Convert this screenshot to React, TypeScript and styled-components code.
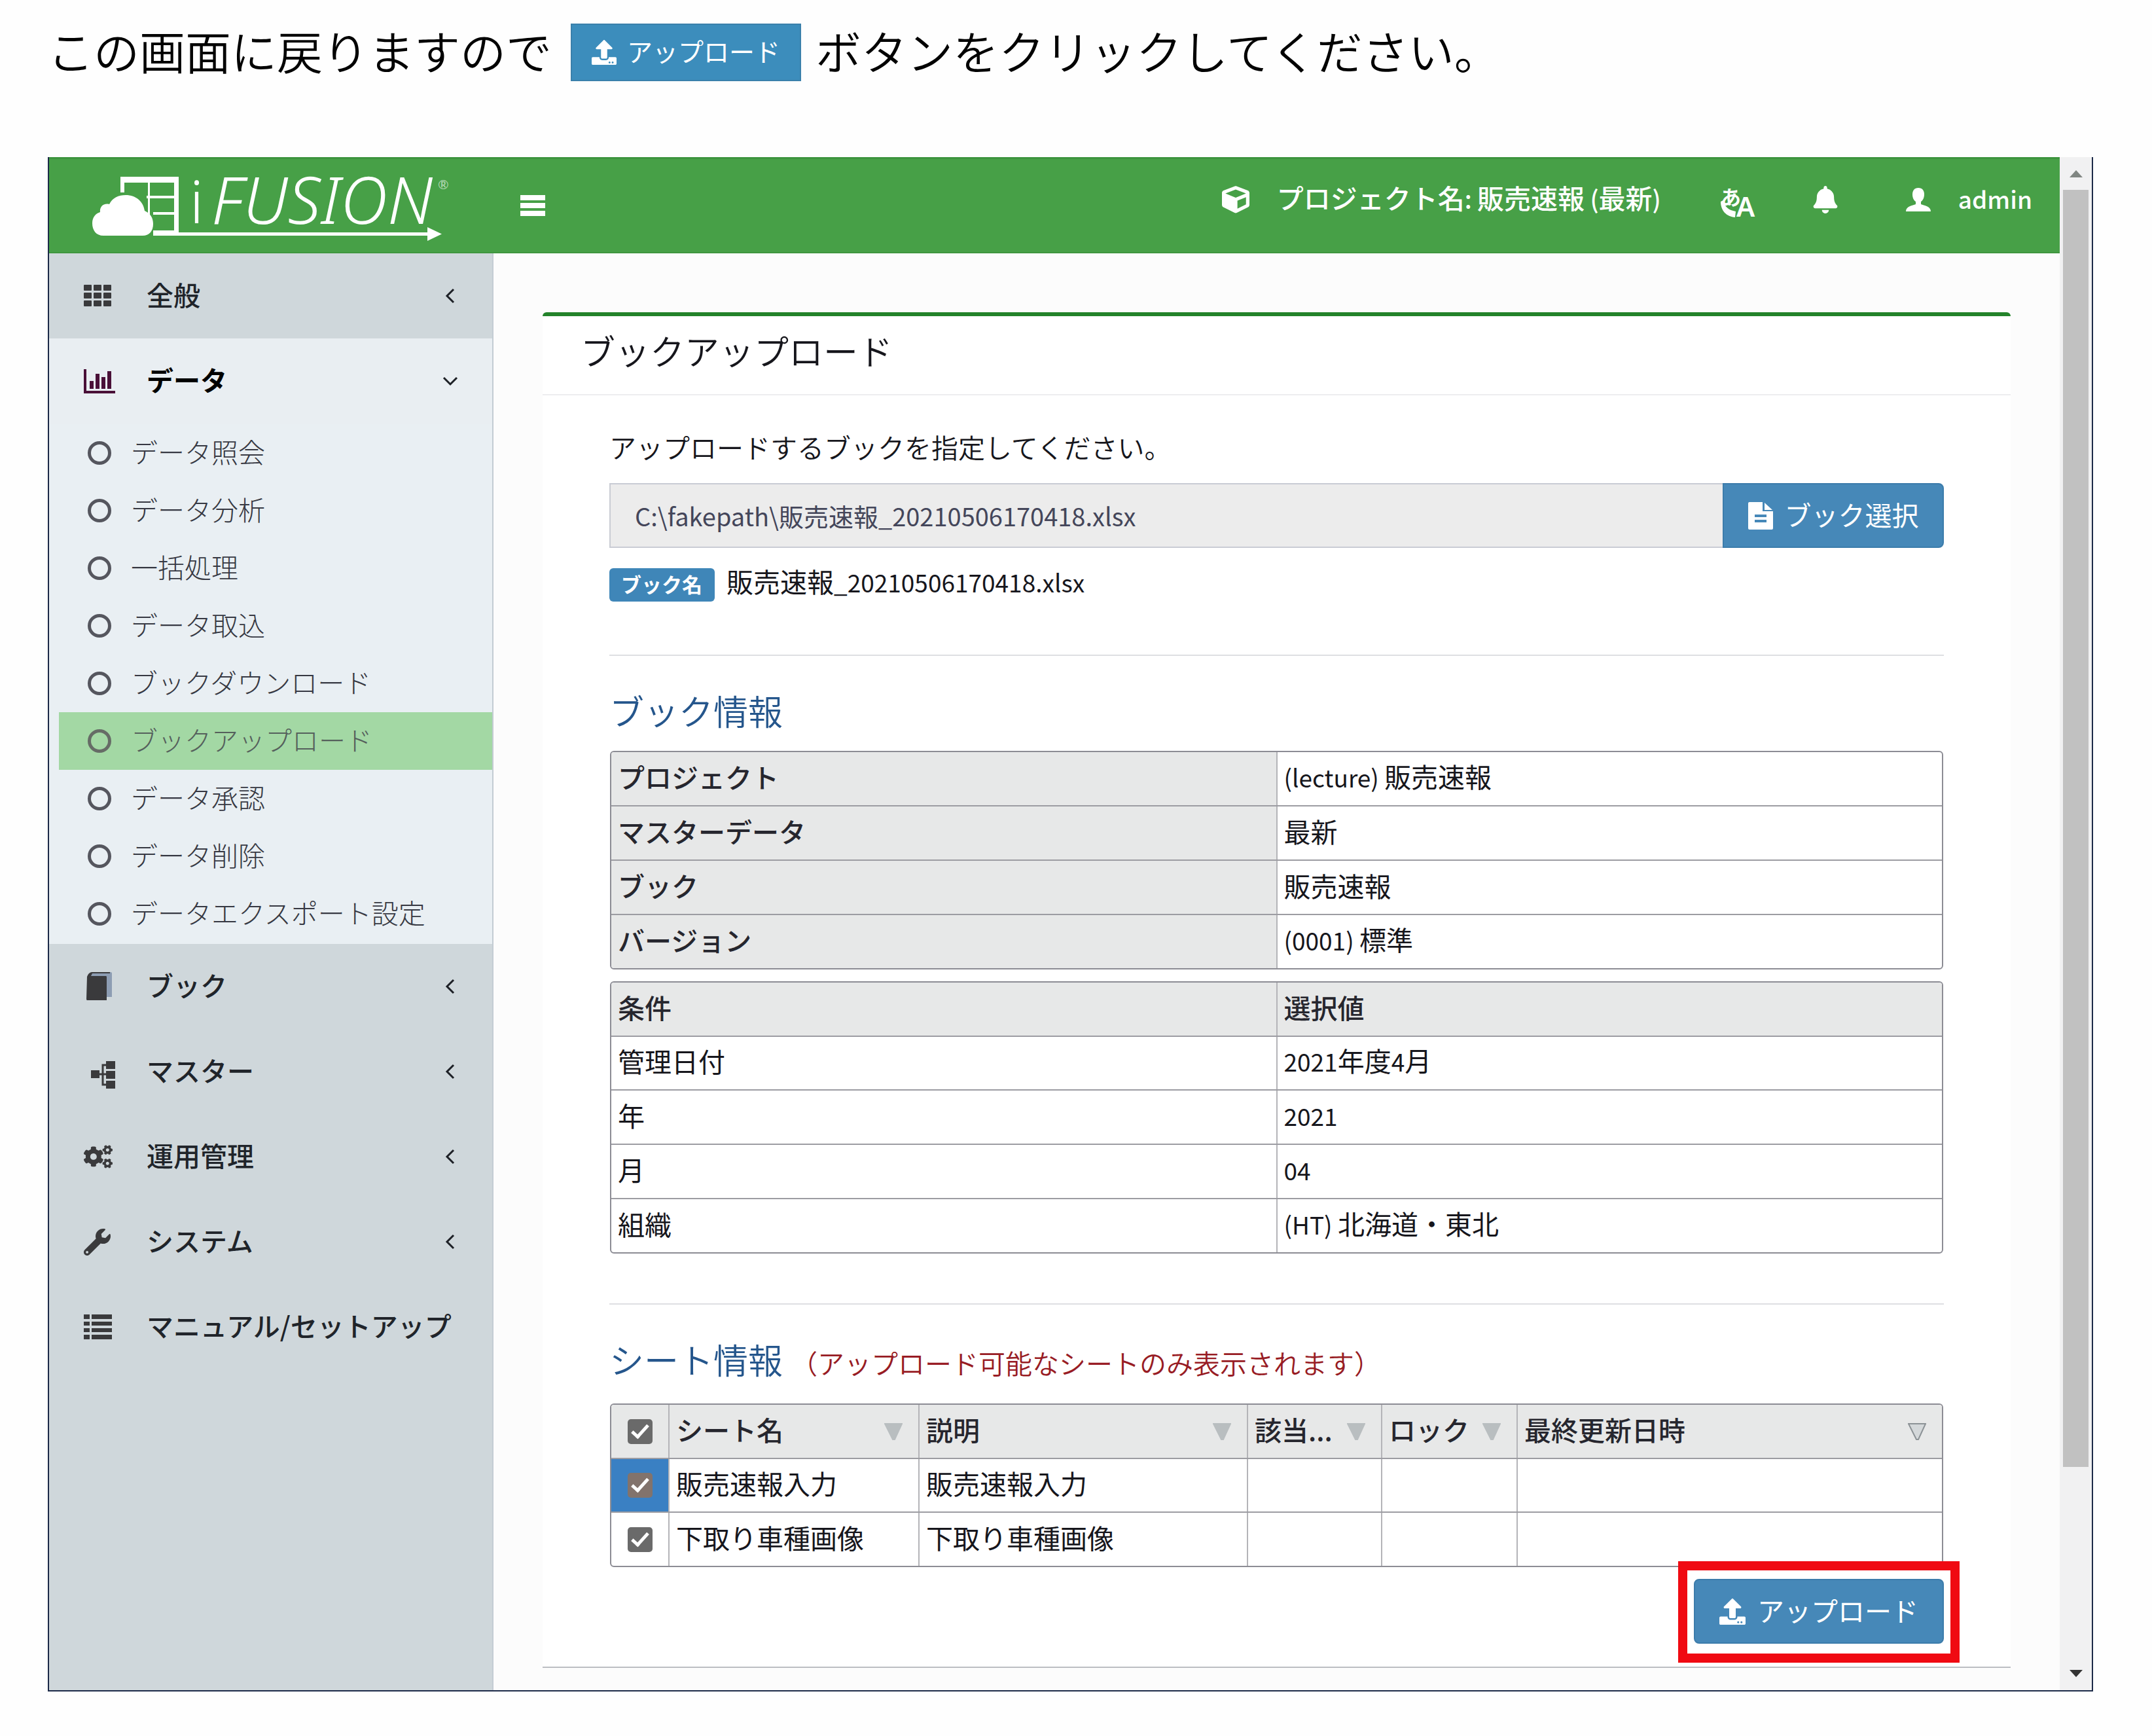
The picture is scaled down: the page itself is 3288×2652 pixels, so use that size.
import React from "react";
import styled, { createGlobalStyle } from "styled-components";
import { FaUpload, FaBell, FaCogs, FaWrench, FaCube } from "react-icons/fa";

const font = `"Noto Sans CJK JP", "Noto Sans", sans-serif`;

const GlobalStyle = createGlobalStyle`
  *, *::before, *::after { box-sizing: border-box; }
  body { margin: 0; background: #fefefe; color: #16161c; font: 400 41px/60px ${font}; }
  button, input { font-family: inherit; }
  svg { display: block; flex: none; }
`;

const Latin = styled.span`
  font-size: 37px;
`;

/* Latin runs are set a little smaller than the kana and kanji around them. */
const Mixed = ({ text }: { text: string }) => (
  <>
    {text.split(/([\x20-\x7e]+)/).map((part, i) => (i % 2 ? <Latin key={i}>{part}</Latin> : part))}
  </>
);

/* Text beside an icon, raised so that its ink is centred on the icon. */
const Label = styled.span`
  padding-bottom: 6px;
`;

const Page = styled.div`
  padding: 36px 90px 68px 73px;
`;

const Instruction = styled.p`
  display: flex;
  align-items: center;
  margin: 0 0 116px;
  font-size: 70px;
  line-height: 82px;
  font-weight: 350;
  color: #000;
`;

const Button = styled.button<{ $kind?: "inline" | "addon" }>`
  position: relative;
  display: inline-flex;
  align-items: center;
  justify-content: center;
  flex: none;
  gap: ${(p) => (p.$kind === "inline" ? 16 : 18)}px;
  height: ${(p) => (p.$kind === "inline" ? 88 : 99)}px;
  width: ${(p) => (p.$kind === "inline" ? 352 : p.$kind === "addon" ? 338 : 382)}px;
  margin: ${(p) => (p.$kind === "inline" ? "0 22px 0 29px" : "0")};
  padding: 0;
  border: 2px solid ${(p) => (p.$kind === "inline" ? "#3a80ab" : "#3c7cab")};
  border-radius: ${(p) => (p.$kind === "inline" ? "0" : p.$kind === "addon" ? "0 8px 8px 0" : "8px")};
  background: ${(p) => (p.$kind === "inline" ? "#3c8dbc" : "#4688b8")};
  color: #fff;
  font-size: ${(p) => (p.$kind === "inline" ? 39 : 41)}px;
  line-height: 60px;
`;

const Frame = styled.div`
  display: flex;
  border: solid #1c2a48;
  border-width: 0 2px 2px;
`;

const Window = styled.div`
  flex: 1;
  min-width: 0;
  display: flex;
  flex-direction: column;
`;

const Header = styled.header`
  display: flex;
  align-items: flex-start;
  height: 147px;
  background: #47a047;
  border-top: 3px solid #3d943e;
  border-bottom: 2px solid #3f963f;
  color: #fff;
`;

const MenuToggle = styled.button`
  margin: 47px auto 0 160px;
  padding: 8px 0;
  border: 0;
  background: none;
  color: #fff;
`;

const NavItem = styled.a<{ $gap: number }>`
  display: flex;
  align-items: center;
  gap: 42px;
  height: 60px;
  margin: 32px ${(p) => p.$gap}px 0 0;
  color: #fff;
  font-weight: 500;
  text-decoration: none;
`;

const Body = styled.div`
  display: flex;
  flex: 1;
`;

const Sidebar = styled.nav`
  width: 679px;
  flex: none;
  background: #cfd7db;
  border-right: 2px solid #c3ccd3;
`;

const MenuLink = styled.a<{ $open?: boolean }>`
  display: flex;
  align-items: center;
  height: 130px;
  padding: 0 52px 0 53px;
  background: ${(p) => (p.$open ? "#e9eef2" : "transparent")};
  color: ${(p) => (p.$open ? "#000" : "#20242a")};
  font-weight: ${(p) => (p.$open ? 700 : 500)};
  text-decoration: none;
  white-space: nowrap;
`;

const MenuIcon = styled.span<{ $color?: string }>`
  display: flex;
  width: 96px;
  color: ${(p) => p.$color ?? "#3a3a3c"};
`;

const MenuText = styled(Label)`
  flex: 1;
`;

const SubMenu = styled.ul`
  margin: 0;
  padding: 1px 0 2px 15px;
  list-style: none;
  background: #e9eff3;
`;

const SubLink = styled.a<{ $active?: boolean }>`
  display: flex;
  align-items: center;
  gap: 30px;
  height: 88px;
  padding-left: 44px;
  background: ${(p) => (p.$active ? "#a3d8a4" : "transparent")};
  color: ${(p) => (p.$active ? "#55605c" : "#363842")};
  font-weight: 300;
  text-decoration: none;
`;

const Circle = styled.span<{ $active?: boolean }>`
  width: 36px;
  height: 36px;
  border: 5px solid ${(p) => (p.$active ? "#666c66" : "#55565e")};
  border-radius: 50%;
`;

const Main = styled.main`
  flex: 1;
  min-width: 0;
  padding: 90px 75px 34px;
  background: #fcfcfc;
`;

const Panel = styled.section`
  border-top: 6px solid #23832a;
  border-bottom: 2px solid #bcbec2;
  border-radius: 6px 6px 0 0;
  background: #fff;
`;

const PanelTitle = styled.h1`
  margin: 0;
  padding: 17px 58px 32px;
  border-bottom: 2px solid #ededef;
  font-size: 53px;
  line-height: 70px;
  font-weight: 350;
`;

const PanelBody = styled.div`
  padding: 48px 102px 35px;
`;

const FieldLabel = styled.label`
  display: block;
  margin-bottom: 26px;
  font-weight: 350;
`;

const InputGroup = styled.div`
  display: flex;
`;

const PathInput = styled.input`
  flex: 1;
  min-width: 0;
  height: 99px;
  padding: 0 37px;
  border: 2px solid #c9ccd4;
  border-right: 0;
  border-radius: 0;
  background: #ececec;
  color: #44465a;
  font-size: 38px;
  font-weight: 400;
`;

const FileRow = styled.div`
  display: flex;
  align-items: baseline;
  gap: 18px;
  margin-top: 20px;
  padding-bottom: 5px;
  font-weight: 400;
`;

const Badge = styled.span`
  padding: 0 19px 4px 18px;
  border-radius: 6px;
  background: #3f86b8;
  color: #fff;
  font-size: 31px;
  line-height: 47px;
  font-weight: 700;
`;

const Rule = styled.hr`
  height: 2px;
  margin: 76px 0 48px;
  border: 0;
  background: #dedfe2;
`;

const SectionTitle = styled.h2`
  display: flex;
  align-items: baseline;
  gap: 12px;
  margin: 0 0 27px;
  color: #25568c;
  font-size: 53px;
  line-height: 70px;
  font-weight: 350;
`;

const Note = styled.small`
  color: #981c24;
  font-size: 41px;
  line-height: 72px;
`;

const TableBox = styled.div`
  margin: 0 1px 18px;
  border: 2px solid #8c8c94;
  border-radius: 6px;
  overflow: hidden;
`;

const Table = styled.table`
  width: 100%;
  border-collapse: collapse;
  table-layout: fixed;
  font-weight: 400;

  th, td {
    height: 83px;
    padding: 0 10px 8px;
    border: 2px solid #9c9ca2;
    border-left-color: #b4b4b8;
    border-right-color: #b4b4b8;
    text-align: left;
    white-space: nowrap;
  }
  th {
    background: #e7e8e8;
    color: #26262e;
    font-weight: 500;
  }
  tr:first-child > * { border-top: 0; height: 82px; }
  thead + tbody tr:first-child > * { border-top: 2px solid #9c9ca2; }
  tr > :first-child { border-left: 0; }
  tr > :last-child { border-right: 0; }
  tbody tr:last-child > * { border-bottom: 0; height: 82px; }
`;

const CheckCell = styled.td<{ $selected?: boolean }>`
  background: ${(p) => (p.$selected ? "#3a80c3" : "transparent")};
`;

const Check = styled.input.attrs({ type: "checkbox" })<{ $warm?: boolean }>`
  appearance: none;
  display: block;
  width: 38px;
  height: 38px;
  margin: 8px auto 0;
  border-radius: 5px;
  background: ${(p) => (p.$warm ? "#82736c" : "#6a6a6a")};

  &:checked::before {
    content: "";
    display: block;
    width: 14px;
    height: 26px;
    margin: 3px auto 0;
    border: solid #fff;
    border-width: 0 5px 5px 0;
    transform: rotate(42deg);
  }
`;

const HeadCell = styled.div`
  display: flex;
  align-items: center;
  justify-content: space-between;
`;

const FilterButton = styled.button`
  padding: 10px 14px 0 0;
  border: 0;
  background: none;
`;

const Actions = styled.div`
  display: flex;
  justify-content: flex-end;
`;

const Highlight = styled.div`
  position: relative;
  display: flex;

  &::before {
    content: "";
    position: absolute;
    inset: -27px -24px -29px;
    border: 14px solid #f00a12;
    background: #fff;
  }
`;

const Scrollbar = styled.div`
  display: flex;
  flex-direction: column;
  align-items: center;
  width: 49px;
  flex: none;
  background: #f1f1f2;
`;

const ScrollArrow = styled.span`
  display: flex;
  align-items: center;
  height: 50px;
`;

const Track = styled.div`
  flex: 1;
  width: 39px;
`;

const Thumb = styled.div`
  height: 87%;
  background: #c1c1c1;
`;

const Logo = () => (
  <svg width="560" height="144" viewBox="75 243 560 144" overflow="visible" fill="#fff" role="img" aria-label="iFUSION">
    <path d="M184 270H273V355H653V347L675 357.500L653 368V360H234V352H266V328H234V324H266V303H224V299H266V279H190V294H184Z" />
    <path d="M226 279H229V330H226Z" />
    <path d="M158 360C147 360 141 352 141 341C141 331 147 326 153 324C152 316 158 310 167 312C172 302 181 298 192 298C208 298 219 308 221 322C230 326 234 333 234 342C234 353 228 360 218 360Z" />
    <text x="290" y="341" fontFamily="Noto Sans" fontWeight="300" fontSize="90">i</text>
    <text x="323" y="342" fontFamily="Noto Sans" fontWeight="300" fontStyle="italic" fontSize="100">FUSION</text>
    <text x="669" y="289" fontFamily="Lato" fontSize="20" opacity="0.6">®</text>
  </svg>
);

const MenuBars = () => (
  <svg width="38" height="32" viewBox="0 0 38 32" fill="#fff">
    <path d="M0 0H38V8H0ZM0 12H38V20H0ZM0 24H38V32H0Z" />
  </svg>
);

const LanguageIcon = () => (
  <svg width="56" height="90" viewBox="0 -20 56 90" fill="#fff">
    <text x="1" y="33" fontSize="31" fontWeight="700">あ</text>
    <text x="25" y="51" fontFamily="Noto Sans" fontSize="42" fontWeight="600">A</text>
    <path d="M5 26C7 36 13 41 24 43L23 52C10 51 1 42 1 28Z" />
  </svg>
);

const UserIcon = () => (
  <svg width="38" height="36" viewBox="0 0 38 36" fill="currentColor">
    <path d="M19 0C25 0 28 4 28 10C28 15 26 19 23 21V25C28 27 38 28 38 36H0C0 28 10 27 15 25V21C12 19 10 15 10 10C10 4 13 0 19 0Z" />
  </svg>
);

const FileIcon = () => (
  <svg width="38" height="42" viewBox="0 0 38 42">
    <path fill="#fff" d="M2 0H22V14H38V40Q38 42 36 42H2Q0 42 0 40V2Q0 0 2 0ZM25 1L37 12H25Z" />
    <path fill="#4688b8" d="M10 19H28V23H10ZM10 27H28V31H10Z" />
  </svg>
);

const GridIcon = () => (
  <svg width="42" height="34" viewBox="0 0 42 34" fill="currentColor">
    {[0, 15, 30].map((x) => [0, 12, 24].map((y) => <rect key={`${x}-${y}`} x={x} y={y} width="12" height="9" rx="1" />))}
  </svg>
);

const ChartIcon = () => (
  <svg width="48" height="37" viewBox="0 0 48 37" fill="currentColor">
    <path d="M0 0H4V33H48V37H0ZM9 18H15V30H9ZM18 7H24V30H18ZM27 12H33V30H27ZM36 3H42V30H36Z" />
  </svg>
);

const BookIcon = () => (
  <svg width="44" height="44" viewBox="0 0 44 44">
    <path fill="#8d9db3" d="M12 0H41Q43 0 43 2V38H34V8H8Z" />
    <path fill="currentColor" d="M5 7Q7 1 12 0H40V2H13L11 6H34Q35 6 35 8V43H5Q4 43 4 41Z" />
  </svg>
);

const TreeIcon = () => (
  <svg width="48" height="52" viewBox="0 0 48 52" fill="currentColor">
    <path d="M11 24H24V36H11ZM34 10H48V22H34ZM34 25H48V37H34ZM34 40H48V52H34Z" />
    <path fill="none" stroke="currentColor" strokeWidth="3" d="M24 30H34M34 16H29V46H34" />
  </svg>
);

const ListIcon = () => (
  <svg width="43" height="38" viewBox="0 0 43 38" fill="currentColor">
    <path d="M0 0H9V7H0ZM12 0H43V7H12ZM0 11H9V17H0ZM12 11H43V17H12ZM0 21H9V27H0ZM12 21H43V27H12ZM0 31H9V38H0ZM12 31H43V38H12Z" />
  </svg>
);

const Chevron = ({ down }: { down?: boolean }) => (
  <svg width="24" height="24" viewBox="0 0 24 24" fill="none" stroke="#1d2026" strokeWidth="3">
    <path d={down ? "M2 7L12 17L22 7" : "M17 2L7 12L17 22"} />
  </svg>
);

const FilterIcon = ({ last }: { last?: boolean }) => (
  <svg width="28" height="27" viewBox="0 0 28 27">
    <path
      d="M1 1H27L16 25H13Z"
      fill={last ? "#d4d8da" : "#b9bec0"}
      stroke={last ? "#8c9296" : "#b9bec0"}
      strokeWidth="2"
    />
  </svg>
);

const Arrow = ({ down }: { down?: boolean }) => (
  <svg width="20" height="12" viewBox="0 0 20 12" fill={down ? "#333" : "#808682"}>
    <path d={down ? "M0 0H20L10 11Z" : "M0 12H20L10 1Z"} />
  </svg>
);

const subItems = [
  "データ照会",
  "データ分析",
  "一括処理",
  "データ取込",
  "ブックダウンロード",
  "ブックアップロード",
  "データ承認",
  "データ削除",
  "データエクスポート設定",
];

const lowerMenu = [
  { label: "ブック", icon: <BookIcon />, arrow: true },
  { label: "マスター", icon: <TreeIcon />, arrow: true },
  { label: "運用管理", icon: <FaCogs size={44} />, arrow: true },
  { label: "システム", icon: <FaWrench size={41} />, arrow: true },
  { label: "マニュアル/セットアップ", icon: <ListIcon />, arrow: false },
];

const bookInfo = [
  ["プロジェクト", "(lecture) 販売速報"],
  ["マスターデータ", "最新"],
  ["ブック", "販売速報"],
  ["バージョン", "(0001) 標準"],
];

const conditions = [
  ["管理日付", "2021年度4月"],
  ["年", "2021"],
  ["月", "04"],
  ["組織", "(HT) 北海道・東北"],
];

const sheetColumns = ["シート名", "説明", "該当...", "ロック", "最終更新日時"];
const sheets = ["販売速報入力", "下取り車種画像"];

export default function App() {
  return (
    <Page>
      <GlobalStyle />
      <Instruction>
        <Label>この画面に戻りますので</Label>
        <Button type="button" $kind="inline">
          <FaUpload size={38} />
          <Label>アップロード</Label>
        </Button>
        <Label>ボタンをクリックしてください。</Label>
      </Instruction>

      <Frame>
        <Window>
          <Header>
            <Logo />
            <MenuToggle type="button" aria-label="メニュー">
              <MenuBars />
            </MenuToggle>
            <NavItem href="#project" $gap={90}>
              <FaCube size={42} />
              <Label>
                <Mixed text="プロジェクト名: 販売速報 (最新)" />
              </Label>
            </NavItem>
            <NavItem href="#language" $gap={84} aria-label="言語">
              <LanguageIcon />
            </NavItem>
            <NavItem href="#notices" $gap={102} aria-label="通知">
              <FaBell size={42} />
            </NavItem>
            <NavItem href="#user" $gap={42}>
              <UserIcon />
              <Label>
                <Latin>admin</Latin>
              </Label>
            </NavItem>
          </Header>

          <Body>
            <Sidebar>
              <MenuLink href="#general">
                <MenuIcon>
                  <GridIcon />
                </MenuIcon>
                <MenuText>全般</MenuText>
                <Chevron />
              </MenuLink>
              <MenuLink href="#data" $open>
                <MenuIcon $color="#4a1038">
                  <ChartIcon />
                </MenuIcon>
                <MenuText>データ</MenuText>
                <Chevron down />
              </MenuLink>
              <SubMenu>
                {subItems.map((label) => {
                  const active = label === "ブックアップロード";
                  return (
                    <li key={label}>
                      <SubLink href="#item" $active={active}>
                        <Circle $active={active} />
                        <Label>{label}</Label>
                      </SubLink>
                    </li>
                  );
                })}
              </SubMenu>
              {lowerMenu.map((item) => (
                <MenuLink href="#menu" key={item.label}>
                  <MenuIcon>{item.icon}</MenuIcon>
                  <MenuText>{item.label}</MenuText>
                  {item.arrow && <Chevron />}
                </MenuLink>
              ))}
            </Sidebar>

            <Main>
              <Panel>
                <PanelTitle>ブックアップロード</PanelTitle>
                <PanelBody>
                  <FieldLabel htmlFor="book-path">アップロードするブックを指定してください。</FieldLabel>
                  <InputGroup>
                    <PathInput id="book-path" readOnly value={"C:\\fakepath\\販売速報_20210506170418.xlsx"} />
                    <Button type="button" $kind="addon">
                      <FileIcon />
                      <Label>ブック選択</Label>
                    </Button>
                  </InputGroup>
                  <FileRow>
                    <Badge>ブック名</Badge>
                    <span>
                      <Mixed text="販売速報_20210506170418.xlsx" />
                    </span>
                  </FileRow>

                  <Rule />
                  <SectionTitle>ブック情報</SectionTitle>
                  <TableBox>
                    <Table>
                      <tbody>
                        {bookInfo.map(([name, value]) => (
                          <tr key={name}>
                            <th scope="row">{name}</th>
                            <td>
                              <Mixed text={value} />
                            </td>
                          </tr>
                        ))}
                      </tbody>
                    </Table>
                  </TableBox>
                  <TableBox>
                    <Table>
                      <thead>
                        <tr>
                          <th scope="col">条件</th>
                          <th scope="col">選択値</th>
                        </tr>
                      </thead>
                      <tbody>
                        {conditions.map(([name, value]) => (
                          <tr key={name}>
                            <td>{name}</td>
                            <td>
                              <Mixed text={value} />
                            </td>
                          </tr>
                        ))}
                      </tbody>
                    </Table>
                  </TableBox>

                  <Rule />
                  <SectionTitle>
                    シート情報
                    <Note>（アップロード可能なシートのみ表示されます）</Note>
                  </SectionTitle>
                  <TableBox>
                    <Table>
                      <colgroup>
                        <col width="88" />
                        <col width="382" />
                        <col width="502" />
                        <col width="205" />
                        <col width="207" />
                        <col />
                      </colgroup>
                      <thead>
                        <tr>
                          <th scope="col">
                            <Check defaultChecked aria-label="すべて選択" />
                          </th>
                          {sheetColumns.map((name, i) => (
                            <th scope="col" key={name}>
                              <HeadCell>
                                {name}
                                <FilterButton type="button" aria-label={`${name} フィルター`}>
                                  <FilterIcon last={i === sheetColumns.length - 1} />
                                </FilterButton>
                              </HeadCell>
                            </th>
                          ))}
                        </tr>
                      </thead>
                      <tbody>
                        {sheets.map((name, i) => (
                          <tr key={name}>
                            <CheckCell $selected={i === 0}>
                              <Check defaultChecked $warm={i === 0} aria-label={name} />
                            </CheckCell>
                            <td>{name}</td>
                            <td>{name}</td>
                            <td />
                            <td />
                            <td />
                          </tr>
                        ))}
                      </tbody>
                    </Table>
                  </TableBox>
                  <Actions>
                    <Highlight>
                      <Button type="button">
                        <FaUpload size={40} />
                        <Label>アップロード</Label>
                      </Button>
                    </Highlight>
                  </Actions>
                </PanelBody>
              </Panel>
            </Main>
          </Body>
        </Window>
        <Scrollbar>
          <ScrollArrow>
            <Arrow />
          </ScrollArrow>
          <Track>
            <Thumb />
          </Track>
          <ScrollArrow>
            <Arrow down />
          </ScrollArrow>
        </Scrollbar>
      </Frame>
    </Page>
  );
}
